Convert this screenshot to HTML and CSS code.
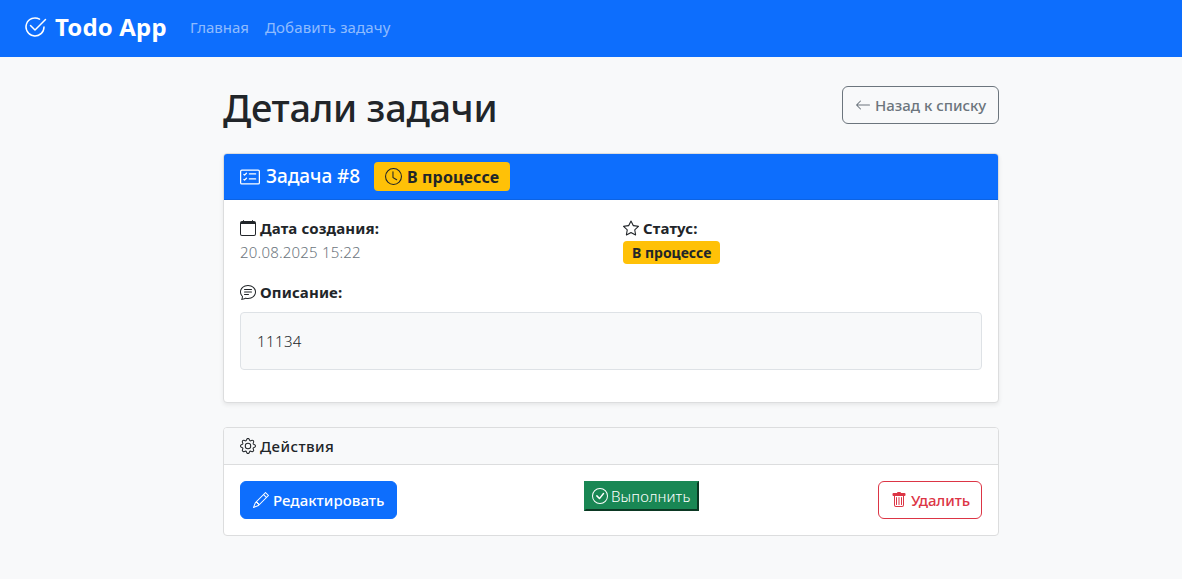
FILE: index.html
```html
<!DOCTYPE html>
<html lang="ru">
<head>
<meta charset="utf-8">
<title>Детали задачи</title>
<link rel="stylesheet" href="styles.css">
</head>
<body>
<nav class="navbar">
  <a class="brand"><svg class="icon icon-brand" viewBox="0 0 16 16"><path d="M2.5 8a5.5 5.5 0 0 1 8.25-4.764.5.5 0 0 0 .5-.866A6.5 6.5 0 1 0 14.5 8a.5.5 0 0 0-1 0 5.5 5.5 0 1 1-11 0"/><path d="M15.354 3.354a.5.5 0 0 0-.708-.708L8 9.293 5.354 6.646a.5.5 0 1 0-.708.708l3 3a.5.5 0 0 0 .708 0z"/></svg><span class="brand-name">Todo App</span></a>
  <a class="nav-link nav-home">Главная</a>
  <a class="nav-link nav-add">Добавить задачу</a>
</nav>
<main class="container">
  <header class="page-head">
    <h1 class="title">Детали задачи</h1>
    <a class="btn btn-back"><svg class="icon" viewBox="0 0 16 16"><path fill-rule="evenodd" d="M15 8a.5.5 0 0 0-.5-.5H2.707l3.147-3.146a.5.5 0 1 0-.708-.708l-4 4a.5.5 0 0 0 0 .708l4 4a.5.5 0 0 0 .708-.708L2.707 8.5H14.5A.5.5 0 0 0 15 8"/></svg><span class="back-text">Назад к списку</span></a>
  </header>

  <section class="card card-task">
    <div class="task-head">
      <svg class="icon icon-task" viewBox="0 0 16 16"><path d="M14.5 3a.5.5 0 0 1 .5.5v9a.5.5 0 0 1-.5.5h-13a.5.5 0 0 1-.5-.5v-9a.5.5 0 0 1 .5-.5zm-13-1A1.500 1.500 0 0 0 0 3.500v9A1.500 1.500 0 0 0 1.500 14h13a1.500 1.500 0 0 0 1.500-1.500v-9A1.500 1.500 0 0 0 14.500 2z"/><path d="M7 5.500a.5.5 0 0 1 .5-.5h5a.5.5 0 0 1 0 1h-5a.5.5 0 0 1-.5-.5m-1.496-.854a.5.5 0 0 1 0 .708l-1.500 1.500a.5.5 0 0 1-.708 0l-.5-.5a.5.5 0 1 1 .708-.708l.146.147 1.146-1.147a.5.5 0 0 1 .708 0M7 9.500a.5.5 0 0 1 .5-.5h5a.5.5 0 0 1 0 1h-5a.5.5 0 0 1-.5-.5m-1.496-.854a.5.5 0 0 1 0 .708l-1.500 1.500a.5.5 0 0 1-.708 0l-.5-.5a.5.5 0 0 1 .708-.708l.146.147 1.146-1.147a.5.5 0 0 1 .708 0"/></svg>
      <span class="task-name">Задача #8</span>
      <span class="badge badge-lg"><svg class="icon icon-clock" viewBox="0 0 16 16"><path d="M8 3.500a.5.5 0 0 0-1 0V9a.5.5 0 0 0 .252.434l3.500 2a.5.5 0 0 0 .496-.868L8 8.710z"/><path d="M8 16A8 8 0 1 0 8 0a8 8 0 0 0 0 16m7-8A7 7 0 1 1 1 8a7 7 0 0 1 14 0"/></svg><span class="badge-lg-text">В процессе</span></span>
    </div>
    <div class="task-body">
      <div class="facts">
        <div class="fact">
          <div class="label"><svg class="icon" viewBox="0 0 16 16"><path d="M3.500 0a.5.5 0 0 1 .5.5V1h8V.5a.5.5 0 0 1 1 0V1h1a2 2 0 0 1 2 2v11a2 2 0 0 1-2 2H2a2 2 0 0 1-2-2V3a2 2 0 0 1 2-2h1V.5a.5.5 0 0 1 .5-.5M1 4v10a1 1 0 0 0 1 1h12a1 1 0 0 0 1-1V4z"/></svg><strong class="label-date">Дата создания:</strong></div>
          <div class="date">20.08.2025 15:22</div>
        </div>
        <div class="fact">
          <div class="label"><svg class="icon" viewBox="0 0 16 16"><path d="M2.866 14.850c-.078.444.36.791.746.593l4.390-2.256 4.389 2.256c.386.198.824-.149.746-.592l-.83-4.730 3.522-3.356c.33-.314.16-.888-.282-.95l-4.898-.696L8.465.792a.513.513 0 0 0-.927 0L5.354 5.120l-4.898.696c-.441.062-.612.636-.283.950l3.523 3.356-.83 4.730zm4.905-2.767-3.686 1.894.694-3.957a.56.56 0 0 0-.163-.505L1.710 6.745l4.052-.576a.53.53 0 0 0 .393-.288L8 2.223l1.847 3.658a.53.53 0 0 0 .393.288l4.052.575-2.906 2.770a.56.56 0 0 0-.163.506l.694 3.957-3.686-1.894a.5.5 0 0 0-.461 0z"/></svg><strong class="label-status">Статус:</strong></div>
          <span class="badge badge-sm">В процессе</span>
        </div>
      </div>
      <div class="label label-row"><svg class="icon" viewBox="0 0 16 16"><path d="M2.678 11.894a1 1 0 0 1 .287.801 11 11 0 0 1-.398 2c1.395-.323 2.247-.697 2.634-.893a1 1 0 0 1 .71-.074A8 8 0 0 0 8 14c3.996 0 7-2.807 7-6s-3.004-6-7-6-7 2.808-7 6c0 1.468.617 2.830 1.678 3.894m-.493 3.905a22 22 0 0 1-.713.129c-.2.032-.352-.176-.273-.362a10 10 0 0 0 .244-.637l.003-.010c.248-.720.450-1.548.524-2.319C.743 11.370 0 9.760 0 8c0-3.866 3.582-7 8-7s8 3.134 8 7-3.582 7-8 7a9 9 0 0 1-2.347-.306c-.52.263-1.639.742-3.468 1.105"/><path d="M4 5.500a.5.5 0 0 1 .5-.5h7a.5.5 0 0 1 0 1h-7a.5.5 0 0 1-.5-.5M4 8a.5.5 0 0 1 .5-.5h7a.5.5 0 0 1 0 1h-7A.5.5 0 0 1 4 8m0 2.500a.5.5 0 0 1 .5-.5h4a.5.5 0 0 1 0 1h-4a.5.5 0 0 1-.5-.5"/></svg><strong class="label-desc">Описание:</strong></div>
      <div class="description">11134</div>
    </div>
  </section>

  <section class="card">
    <div class="actions-head"><svg class="icon" viewBox="0 0 16 16"><path d="M8 4.754a3.246 3.246 0 1 0 0 6.492 3.246 3.246 0 0 0 0-6.492M5.754 8a2.246 2.246 0 1 1 4.492 0 2.246 2.246 0 0 1-4.492 0"/><path d="M9.796 1.343c-.527-1.790-3.065-1.790-3.592 0l-.094.319a.873.873 0 0 1-1.255.520l-.292-.160c-1.640-.892-3.433.902-2.540 2.541l.159.292a.873.873 0 0 1-.520 1.255l-.319.094c-1.790.527-1.790 3.065 0 3.592l.319.094a.873.873 0 0 1 .520 1.255l-.160.292c-.892 1.640.901 3.434 2.541 2.540l.292-.159a.873.873 0 0 1 1.255.520l.094.319c.527 1.790 3.065 1.790 3.592 0l.094-.319a.873.873 0 0 1 1.255-.520l.292.160c1.640.893 3.434-.902 2.540-2.541l-.159-.292a.873.873 0 0 1 .520-1.255l.319-.094c1.790-.527 1.790-3.065 0-3.592l-.319-.094a.873.873 0 0 1-.520-1.255l.160-.292c.893-1.640-.902-3.433-2.541-2.540l-.292.159a.873.873 0 0 1-1.255-.520zm-2.633.283c.246-.835 1.428-.835 1.674 0l.094.319a1.873 1.873 0 0 0 2.693 1.115l.291-.160c.764-.415 1.600.420 1.184 1.185l-.159.292a1.873 1.873 0 0 0 1.116 2.692l.318.094c.835.246.835 1.428 0 1.674l-.319.094a1.873 1.873 0 0 0-1.115 2.693l.160.291c.415.764-.420 1.600-1.185 1.184l-.291-.159a1.873 1.873 0 0 0-2.693 1.116l-.094.318c-.246.835-1.428.835-1.674 0l-.094-.319a1.873 1.873 0 0 0-2.692-1.115l-.292.160c-.764.415-1.600-.420-1.184-1.185l.159-.291A1.873 1.873 0 0 0 1.945 8.930l-.319-.094c-.835-.246-.835-1.428 0-1.674l.319-.094A1.873 1.873 0 0 0 3.060 4.377l-.160-.292c-.415-.764.420-1.600 1.185-1.184l.292.159a1.873 1.873 0 0 0 2.692-1.115z"/></svg><span class="actions-title">Действия</span></div>
    <div class="actions">
      <a class="btn btn-edit"><svg class="icon" viewBox="0 0 16 16"><path d="M12.146.146a.5.5 0 0 1 .708 0l3 3a.5.5 0 0 1 0 .708l-10 10a.5.5 0 0 1-.168.110l-5 2a.5.5 0 0 1-.650-.650l2-5a.5.5 0 0 1 .110-.168zM11.207 2.500 13.500 4.793 14.793 3.500 12.500 1.207zm1.586 3L10.500 3.207 4 9.707V10h.5a.5.5 0 0 1 .5.5v.5h.5a.5.5 0 0 1 .5.5v.5h.293zm-9.761 5.175-.106.106-1.528 3.821 3.821-1.528.106-.106A.5.5 0 0 1 5 12.500V12h-.5a.5.5 0 0 1-.5-.5V11h-.5a.5.5 0 0 1-.468-.325"/></svg><span class="edit-text">Редактировать</span></a>
      <button class="btn-done"><svg class="icon" viewBox="0 0 16 16"><path d="M8 15A7 7 0 1 1 8 1a7 7 0 0 1 0 14m0 1A8 8 0 1 0 8 0a8 8 0 0 0 0 16"/><path d="m10.970 4.970-.020.022-3.473 4.425-2.093-2.094a.75.75 0 0 0-1.060 1.060L6.970 11.030a.75.75 0 0 0 1.079-.020l3.992-4.990a.75.75 0 0 0-1.071-1.050"/></svg><span class="done-text">Выполнить</span></button>
      <a class="btn btn-delete"><svg class="icon" viewBox="0 0 16 16"><path d="M2.500 1a1 1 0 0 0-1 1v1a1 1 0 0 0 1 1H3v9a2 2 0 0 0 2 2h6a2 2 0 0 0 2-2V4h.5a1 1 0 0 0 1-1V2a1 1 0 0 0-1-1H10a1 1 0 0 0-1-1H7a1 1 0 0 0-1 1zm1.500 3h8v9a1 1 0 0 1-1 1H5a1 1 0 0 1-1-1zm1.500 1a.5.5 0 0 1 .5.5v7a.5.5 0 0 1-1 0v-7a.5.5 0 0 1 .5-.5M8 5a.5.5 0 0 1 .5.5v7a.5.5 0 0 1-1 0v-7A.5.5 0 0 1 8 5m3 .5v7a.5.5 0 0 1-1 0v-7a.5.5 0 0 1 1 0"/></svg><span class="delete-text">Удалить</span></a>
    </div>
  </section>
</main>
</body>
</html>
```
FILE: styles.css
```css
* { box-sizing: border-box; }
body {
  margin: 0;
  min-height: 579px;
  background: #f8f9fa;
  color: #212529;
  font: 400 15px/24px "Noto Sans", "Open Sans", sans-serif;
  white-space: nowrap;
}
.icon { width: 16px; height: 16px; flex: none; fill: currentColor; display: block; }

.navbar { height: 57px; padding: 0 24px 4px 23px; display: flex; align-items: center; background: #0d6efd; color: #fff; }
.brand { display: flex; align-items: center; gap: 8px; width: 167px; }
.icon-brand { width: 24px; height: 24px; }
.brand-name { font-size: 24px; font-weight: 700; line-height: 36px; letter-spacing: .15px; }
.nav-link { color: rgba(255, 255, 255, .55); letter-spacing: .13px; }
.nav-home { width: 75px; letter-spacing: 0; }

.container { width: 776px; margin-left: 223px; padding-top: 29px; }
.page-head { display: flex; justify-content: space-between; align-items: flex-start; height: 67px; }
.title { margin: -3px 0 0; font-size: 38px; font-weight: 500; line-height: 48px; letter-spacing: -.3px; }

.btn { height: 38px; padding: 0 12px; border: 1px solid; border-radius: 6px; display: flex; align-items: center; gap: 4px; font-weight: 500; }
.btn-back { width: 157px; color: #6c757d; }
.btn-edit { width: 157px; color: #fff; background: #0d6efd; border-color: #0d6efd; letter-spacing: .05px; }
.btn-delete { width: 104px; color: #dc3545; letter-spacing: -.1px; }
.btn-done { width: 115px; height: 30px; padding: 0 6px; margin-right: -8px; display: flex; align-items: center; gap: 3px; background: #198754; color: #fff; border: 2px solid; border-color: #198754 #0b3823 #0b3823 #198754; font: 300 15px/24px "Noto Sans", "Open Sans", sans-serif; letter-spacing: .1px; }

.card { background: #fff; border: 1px solid #dcddde; border-radius: 4px; overflow: hidden; }
.card-task { height: 250px; margin-bottom: 24px; box-shadow: 0 2px 4px rgba(0, 0, 0, .075); }
.task-head { height: 46px; padding: 0 16px; display: flex; align-items: center; background: #0d6efd; border-bottom: 1px solid #0c63e4; color: #fff; }
.icon-task { width: 20px; height: 20px; margin-right: 6px; }
.task-name { width: 108px; padding-bottom: 1px; font-size: 19px; font-weight: 500; letter-spacing: -.08px; }

.badge { display: inline-flex; align-items: center; background: #ffc107; color: #212529; font-weight: 700; border-radius: 4px; }
.badge-lg { width: 136px; height: 29px; padding-left: 11px; gap: 5px; font-size: 16px; letter-spacing: .15px; }
.icon-clock { width: 17px; height: 17px; }
.badge-sm { width: 97px; height: 23px; padding-left: 9px; font-size: 14px; }

.task-body { padding: 16px; }
.facts { display: grid; grid-template-columns: 383px 1fr; height: 64px; }
.label { display: flex; align-items: center; gap: 4px; height: 24px; letter-spacing: .12px; }
.label strong { font-weight: 700; }
.fact .badge { display: flex; margin-top: 1px; }
.date { color: #6c757d; font-weight: 300; letter-spacing: .2px; }
.description { height: 58px; margin-top: 8px; padding: 16px; border: 1px solid #dee2e6; border-radius: 4px; background: #f8f9fa; font-weight: 300; letter-spacing: .4px; }

.actions-head { height: 37px; padding: 0 16px; display: flex; align-items: center; gap: 4px; background: #f8f9fa; border-bottom: 1px solid #dcddde; font-weight: 500; letter-spacing: .45px; }
.actions { height: 70px; padding: 16px; display: flex; justify-content: space-between; align-items: flex-start; }
```
